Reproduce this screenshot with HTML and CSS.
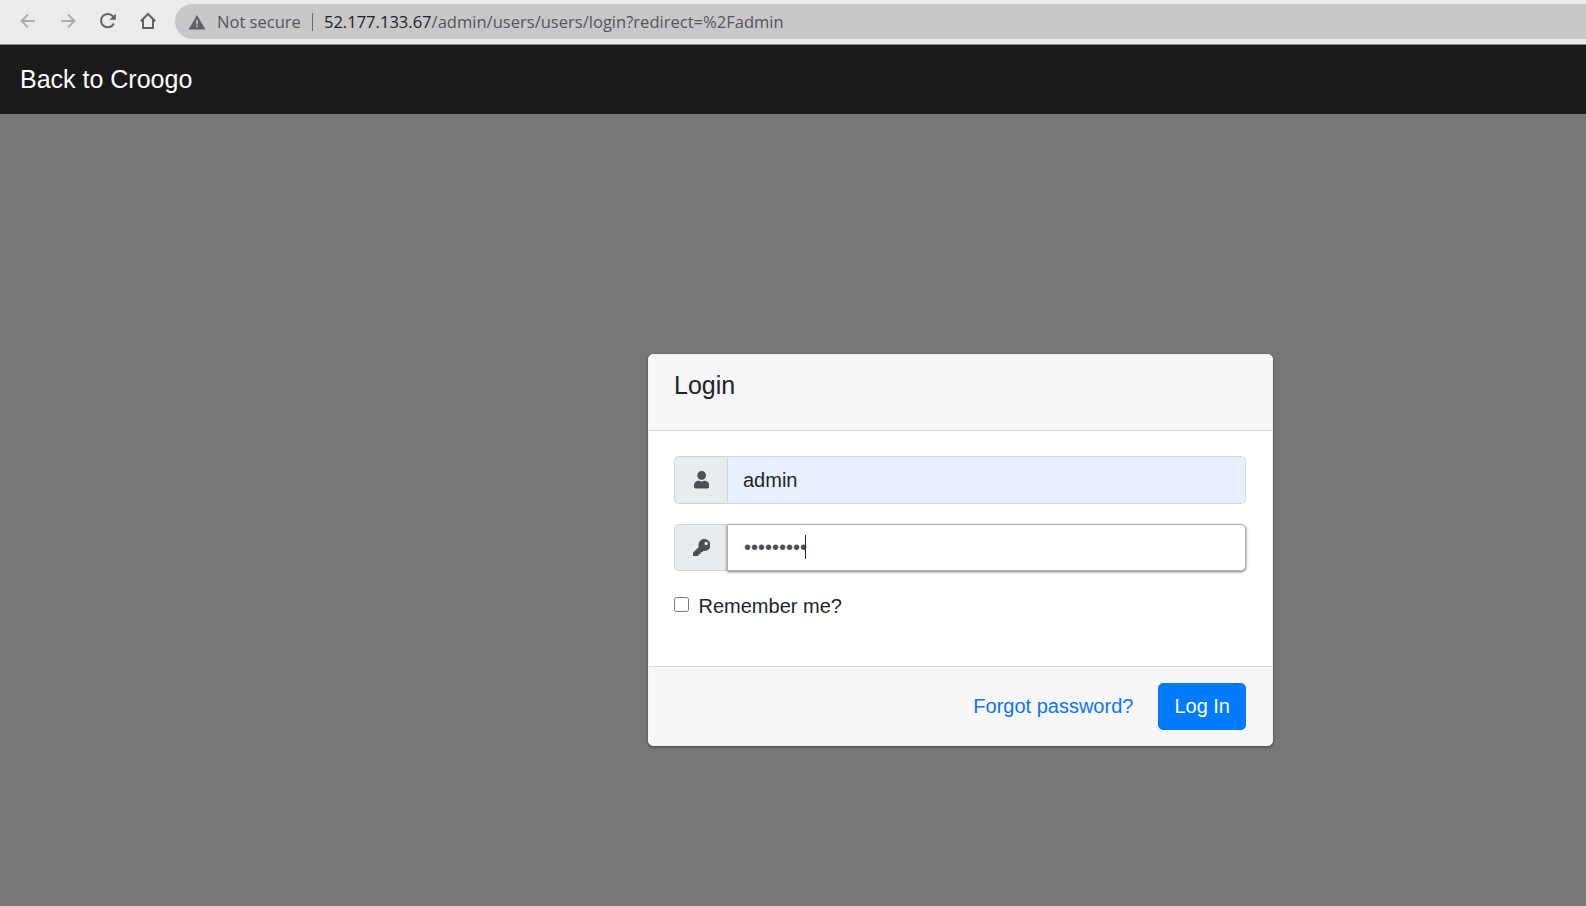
FILE: index.html
```html
<!DOCTYPE html>
<html lang="en">
<head>
<meta charset="utf-8">
<title>Login</title>
<link rel="stylesheet" href="styles.css">
</head>
<body>
<header class="chrome">
  <div class="chrome-nav">
    <svg class="cicon" viewBox="0 0 20 20"><path class="dim" d="M17 10H4M10 3.500L3.500 10l6.500 6.500"/></svg>
    <svg class="cicon" viewBox="0 0 20 20"><path class="dim" d="M3 10h13M10 3.500l6.500 6.500-6.500 6.500"/></svg>
    <svg class="cicon" viewBox="0 0 20 20"><path class="dark" d="M15.800 12.500A6.700 6.700 0 1 1 14.800 5.200L17 7.400"/><path class="fill" d="M17.800 2.400v6.400h-6.400z"/></svg>
    <svg class="cicon" viewBox="0 0 20 20"><path class="dark" d="M2.800 10.200 10 3l7.200 7.200M5 8.500V17h10V8.500"/></svg>
  </div>
  <div class="omnibox">
    <svg class="warn" viewBox="0 0 16 16"><path class="fill" d="M8 1 16.500 15.500H-.5z"/><path class="warn-mark" d="M7.200 6h1.600v4.600H7.200zM7.200 11.500h1.600v1.600H7.200z"/></svg>
    <span class="insecure">Not secure</span>
    <span class="sep"></span>
    <span class="url"><span class="host">52.177.133.67</span>/admin/users/users/login?redirect=%2Fadmin</span>
  </div>
</header>
<nav class="navbar"><a class="brand" href="#">Back to Croogo</a></nav>
<main class="page">
  <form class="card">
    <div class="card-header"><h4 class="card-title">Login</h4></div>
    <div class="card-body">
      <div class="input-group">
        <span class="addon"><svg class="fa user" viewBox="0 0 448 512"><path d="M224 256c70.700 0 128-57.300 128-128S294.700 0 224 0 96 57.300 96 128s57.300 128 128 128zm89.600 32h-16.700c-22.200 10.200-46.900 16-72.900 16s-50.600-5.800-72.900-16h-16.700C60.200 288 0 348.200 0 422.400V464c0 26.500 21.500 48 48 48h352c26.500 0 48-21.500 48-48v-41.600c0-74.200-60.200-134.400-134.400-134.400z"/></svg></span>
        <input class="control filled" type="text" value="admin">
      </div>
      <div class="input-group">
        <span class="addon"><svg class="fa key" viewBox="0 0 512 512"><path d="M512 176.001C512 273.203 433.202 352 336 352c-11.220 0-22.190-1.062-32.827-3.069l-24.012 27.014A23.999 23.999 0 0 1 261.223 384H224v40c0 13.255-10.745 24-24 24h-40v40c0 13.255-10.745 24-24 24H24c-13.255 0-24-10.745-24-24v-78.059c0-6.365 2.529-12.470 7.029-16.971l161.802-161.802C163.108 213.814 160 195.271 160 176 160 78.798 238.797.001 335.999 0 433.488-.001 512 78.511 512 176.001zM336 128c0 26.510 21.490 48 48 48s48-21.490 48-48-21.490-48-48-48-48 21.490-48 48z"/></svg></span>
        <div class="pw-wrap">
          <input class="control focused" type="password" value="password1">
          <span class="caret"></span>
        </div>
      </div>
      <label class="remember"><input class="check" type="checkbox"><span>Remember me?</span></label>
    </div>
    <div class="card-footer">
      <a class="forgot" href="#">Forgot password?</a>
      <button class="btn" type="button">Log In</button>
    </div>
  </form>
</main>
</body>
</html>
```
FILE: styles.css
```css
* { box-sizing: border-box; }
html, body { margin: 0; height: 100%; }
body {
  display: flex;
  flex-direction: column;
  background: #777;
  font-family: "Liberation Sans", Arial, sans-serif;
  font-size: 20px;
  overflow: hidden;
}
.chrome {
  height: 45px;
  flex: none;
  background: #ececed;
  border-bottom: 1px solid #8f8f8f;
  display: flex;
  align-items: flex-start;
  padding: 4px 0 0 18px;
  gap: 17px;
}
.chrome-nav { display: flex; gap: 20px; padding-top: 7px; }
.cicon { width: 20px; height: 20px; display: block; }
.dim { fill: none; stroke: #adadad; stroke-width: 1.900; }
.dark { fill: none; stroke: #5f6368; stroke-width: 2; }
.fill { fill: #5f6368; }
.omnibox {
  flex: 1;
  height: 35px;
  background: #c8c8ca;
  border-radius: 18px 0 0 18px;
  display: flex;
  align-items: center;
  padding-left: 14px;
  font-family: "Open Sans", sans-serif;
  font-size: 16.560px;
  color: #55565a;
}
.warn { width: 16px; height: 16px; margin-right: 12px; overflow: visible; }
.warn-mark { fill: #c8c8ca; }
.sep { width: 1px; height: 18px; background: #6b6c70; margin: 0 11px 0 11px; }
.host { color: #222; }
.navbar {
  height: 69px;
  flex: none;
  background: #1a1a1a;
  display: flex;
  align-items: center;
  padding: 0 20px;
}
.brand { color: #fff; font-size: 25px; text-decoration: none; }
.page {
  flex: 1;
  padding: 240px 0 0 648px;
}
.card {
  width: 625px;
  height: 391.500px;
  display: flex;
  flex-direction: column;
  background: #fff;
  border-radius: 5px;
  border: 1px solid #f1f1f1;
  box-shadow: 0 1px 3px rgba(0,0,0,.45);
}
.card-header {
  height: 76px;
  flex: none;
  padding: 15px 25px;
  background: #f7f7f7;
  border-bottom: 1px solid #d9d9d9;
  border-radius: 4px 4px 0 0;
}
.card-title { margin: 0; font-size: 25px; font-weight: 400; line-height: 30px; color: #212529; }
.card-body { flex: 1; padding: 25px 26px 0 25px; }
.input-group { display: flex; height: 47.500px; margin-bottom: 20px; }
.addon {
  width: 53px;
  flex: none;
  display: flex;
  align-items: center;
  justify-content: center;
  padding-left: 1px;
  background: #e9ecef;
  border: 1px solid #ced4da;
  border-right: 0;
  border-radius: 5px 0 0 5px;
}
.fa { height: 17.500px; fill: #495057; display: block; }
.user { width: 15.300px; }
.key { width: 17.500px; }
.control {
  flex: 1;
  width: 100%;
  min-width: 0;
  height: 100%;
  padding: 8.500px 15px 6.500px;
  font: 20px "Liberation Sans", Arial, sans-serif;
  color: #212529;
  border: 1px solid #ced4da;
  border-radius: 0 5px 5px 0;
  outline: 0;
}
.filled { background: #e8f0fe; }
.pw-wrap { flex: 1; position: relative; display: flex; }
.focused {
  padding: 7.500px 15px 7.500px 16px;
  border-color: #b0b0b0;
  color: #495057;
  box-shadow: 0 1px 3px rgba(0,0,0,.55);
}
.caret {
  position: absolute;
  left: 78px;
  top: 11px;
  width: 1px;
  height: 24px;
  background: #1d2a3a;
}
.remember {
  display: flex;
  align-items: center;
  color: #212529;
  line-height: 30px;
}
.check { width: 15px; height: 15px; margin: 0 9.500px 4px 0; }
.card-footer {
  height: 79px;
  flex: none;
  display: flex;
  align-items: center;
  justify-content: flex-end;
  gap: 25px;
  padding: 1px 26px 0 25px;
  background: #f7f7f7;
  border-top: 1px solid #d9d9d9;
  border-radius: 0 0 4px 4px;
}
.forgot { color: #0f75f0; text-decoration: none; }
.btn {
  height: 47px;
  padding: 0 15px;
  background: #007bff;
  color: #fff;
  border: 1px solid #007bff;
  border-radius: 5px;
  font: 20px "Liberation Sans", Arial, sans-serif;
}
```
